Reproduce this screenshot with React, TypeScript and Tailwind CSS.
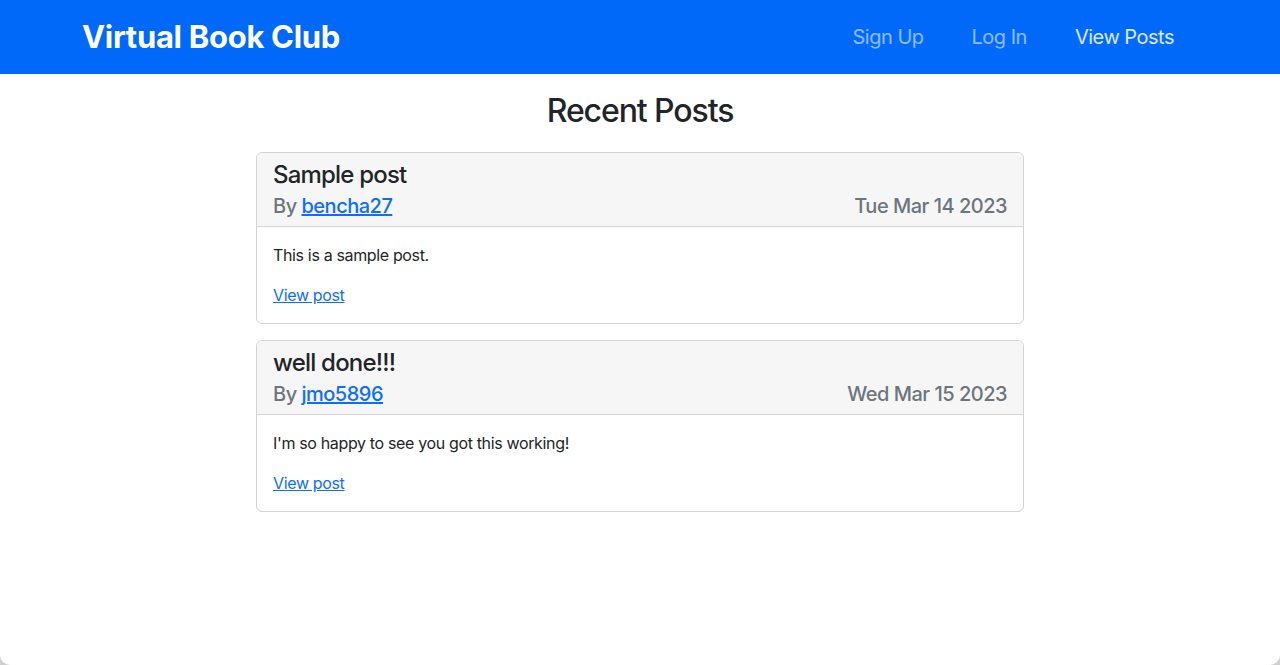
import React from 'react'

interface Post {
  id: number
  title: string
  author: string
  date: string
  body: string
}

const posts: Post[] = [
  { id: 1, title: 'Sample post', author: 'bencha27', date: 'Tue Mar 14 2023', body: 'This is a sample post.' },
  { id: 2, title: 'well done!!!', author: 'jmo5896', date: 'Wed Mar 15 2023', body: "I'm so happy to see you got this working!" },
]

function Navbar() {
  return (
    <nav className="bg-[#0069fa] h-[74px]">
      <div className="max-w-[1140px] mx-auto px-3 h-full flex items-center justify-between">
        <a href="#" className="text-white text-[31px] font-bold tracking-[-0.3px]">
          Virtual Book Club
        </a>
        <div className="flex items-center tracking-[-0.5px]">
          <a href="#" className="px-6 text-[20px] text-white/55">Sign Up</a>
          <a href="#" className="px-6 text-[20px] text-white/55">Log In</a>
          <a href="#" className="px-6 text-[20px] text-white/85">View Posts</a>
        </div>
      </div>
    </nav>
  )
}

function PostCard({ post }: { post: Post }) {
  return (
    <div className="mb-4 border border-[#d3d3d4] rounded-[6px] overflow-hidden">
      {/* header */}
      <div className="bg-[#f6f6f6] border-b border-[#d3d3d4] px-4 py-2">
        <h4 className="text-[24px] leading-[1.2] font-medium text-[#212529] mb-1 tracking-[-0.8px]">{post.title}</h4>
        <div className="flex items-center justify-between text-[20px] leading-[1.2] font-medium text-[#6c757d] tracking-[-0.5px]">
          <span>
            By <a href="#" className="text-[#0d6efd] underline">{post.author}</a>
          </span>
          <span>{post.date}</span>
        </div>
      </div>
      {/* body */}
      <div className="p-4 text-[16px] leading-[24px] text-[#212529] tracking-[-0.35px]">
        <p className="mb-4">{post.body}</p>
        <a href="#" className="text-[#0d6efd] underline">View post</a>
      </div>
    </div>
  )
}

export default function App() {
  return (
    <div className="bg-[#cfcfcf] min-h-screen" style={{ fontFamily: 'Inter, "Noto Sans", sans-serif' }}>
      <div className="bg-white h-[665px] rounded-b-[10px] overflow-hidden">
        <Navbar />
        <main className="max-w-[768px] mx-auto">
          <h2 className="text-center text-[32px] leading-[1.2] font-medium text-[#212529] mt-[18px] mb-[22px] tracking-[-1.1px]">
            Recent Posts
          </h2>
          {posts.map((p) => (
            <PostCard key={p.id} post={p} />
          ))}
        </main>
      </div>
    </div>
  )
}
